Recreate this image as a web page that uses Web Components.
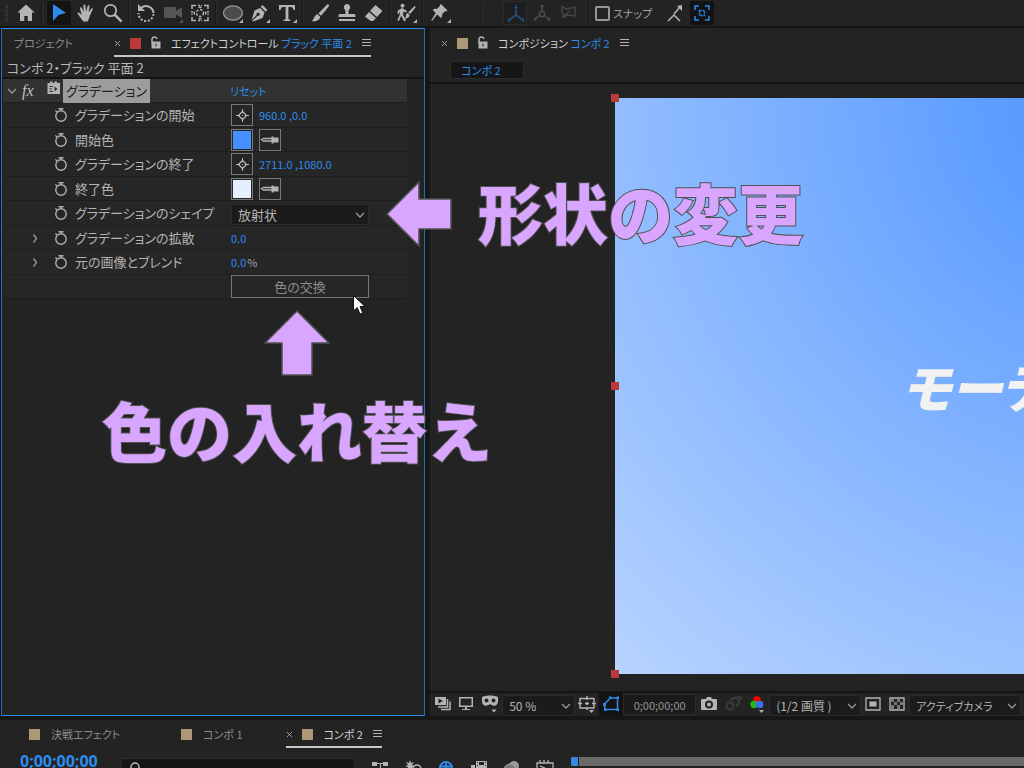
<!DOCTYPE html>
<html lang="ja">
<head>
<meta charset="utf-8">
<title>エフェクトコントロール</title>
<style>
html, body { height: 100%; margin: 0; }
body {
  background: #161616; color: #b8b8b8; overflow: hidden;
  font: 13px/20px "Noto Sans CJK JP", sans-serif;
  font-feature-settings: "palt";
  --blue: #2d8ceb; --panel: #232323; --tan: #ad9776; --red: #b93a38;
}
</style>
</head>
<body>
<ae-app></ae-app>
<script>
const ICONS = {
  grip: '<g fill="#3c3c3c"><path d="M8 4h3v1H8zM8 6h3v1H8zM8 8h3v1H8zM8 10h3v1H8zM8 12h3v1H8zM8 14h3v1H8zM8 16h3v1H8zM8 18h3v1H8zM8 20h3v1H8z"/></g>',
  home: '<path d="M12 3.500l8.600 8H18V20h-4.300v-5h-3.400v5H6v-8.500H3.400z"/>',
  select: '<path fill="#2d8ceb" d="M6 3l13 9-7.500 2L6 20z"/>',
  hand: '<path d="M9.500 20.500C7 18 5.500 15 3.600 12.800c-.5-1.200.9-1.700 1.800-.9l2.300 2L6 7.400c-.2-1.500 1.500-1.700 1.900-.4L9.700 11 9.400 4.600c0-1.500 1.900-1.500 2 0l.7 6.200 1.500-5.800c.5-1.300 2.100-.9 1.900.5l-.8 6 2.500-3.900c.9-1 2-.2 1.500 1l-3 6.500c-.4 2.200-1.300 3.900-2.200 5.400z"/>',
  zoom: '<circle cx="9.500" cy="9.500" r="5.700" fill="none" stroke="currentColor" stroke-width="1.700"/><path d="M13.600 13.600l7 7" stroke="currentColor" stroke-width="2.500"/>',
  rotate: '<path d="M7 7a7.500 7.500 0 0 1 12.500 5" fill="none" stroke="currentColor" stroke-width="2"/><path d="M19.500 13a7.500 7.500 0 0 1-15-1" fill="none" stroke="currentColor" stroke-width="2" stroke-dasharray="2 1.700"/><path d="M4 3v7h7z"/>',
  camera: '<g fill="#555"><rect x="3" y="6" width="12" height="11" rx="1"/><path d="M15 10l6-4v11l-6-3.500zM22 18v4h-4z"/></g>',
  frame: '<g fill="none" stroke="currentColor" stroke-width="1.500"><path d="M4 8V4.500h4M16 4.500h4V8M20 16v3.500h-4M8 19.500H4V16" /><path d="M10 4.500h4M10 19.500h4M4 10v4M20 10v4" stroke-dasharray="2 1"/><circle cx="12" cy="12" r="3.500" stroke-dasharray="2.500 1.500"/></g><path d="M12 5l2 2h-4zM12 19l2-2h-4zM5 12l2-2v4zM19 12l-2-2v4z"/>',
  ellipse: '<ellipse cx="12" cy="12" rx="9.500" ry="7.200" fill="#4c4c4c" stroke="#999" stroke-width="1.300"/><path d="M22 18v4h-4z"/>',
  pen: '<path d="M14.500 4l5 5-1.800 1.800-5-5zM12 7l4.600 4.600-2 5.400L5 20.500 4.300 20 9.500 14.700a1.500 1.500 0 1 0-.8-.8L3.600 19.200 6.500 9.500zM22 18v4h-4z"/>',
  type: '<path d="M4 4h16v5h-1.500c-.3-2-1-3-3-3H13.400v11.500c0 1 .6 1.300 2.100 1.300V20h-7v-1.200c1.500 0 2.100-.3 2.100-1.300V6H8.500c-2 0-2.700 1-3 3H4zM22 18v4h-4z"/>',
  brush: '<path d="M20.500 3.500c1 .8.300 2-.3 2.700L13 14.800l-2.600-2.300 8-8.300c.7-.7 1.400-1.200 2.100-.7zM9.500 13.300l2.800 2.500c-.5 3.500-4.500 5.200-8.800 4.200 2.800-1 2.300-5.700 6-6.700z"/>',
  stamp: '<path d="M12 3a3.200 3.200 0 0 1 2 5.700c-.7 1-.5 3.300-.3 4.300H19c1 0 1.500.8 1.500 2v1h-17v-1c0-1.200.5-2 1.500-2h5.300c.2-1 .4-3.300-.3-4.300A3.200 3.200 0 0 1 12 3zM4 18h16v2H4z"/>',
  eraser: '<path d="M13.500 4l7 6-5.500 6-7-6zM7 11l7 6-2.800 3H8.500L3 15.500z"/>',
  roto: '<circle cx="7.500" cy="4.800" r="2"/><path d="M3 9.500l4-2.500 5 3-1 1.500-2.500-1-.5 3 3 6-1.800 1-3-6L4 20l-1.700-.8 2.500-5.700V10l-1 3-1.500-.5zM20 5c1 .8.300 1.800-.3 2.500L15 13l-1.800-1.600L18.500 6c.5-.6 1-1.100 1.500-1zM12.500 12l2.200 1.900c-.6 2.600-2.500 3.600-5.200 3.600 2-1.200 1-4.800 3-5.500zM22 18v4h-4z"/>',
  pin: '<path d="M13 3l6.500 6.500-1.500 1-1-.2-2.800 2.800c.2 1.800-.2 3-1.200 4L9.200 13.500 4 20l-.8-.6 4.500-7.400L4.700 9c1.200-1 2.400-1.300 4.200-1.100L12 5l-.2-1zM23 18v4h-4z"/>',
  axis: '<g fill="none" stroke="#204f7d" stroke-width="1.600"><path d="M12 5v8M12 13l-7 5M12 13l7 5"/></g><path fill="#204f7d" d="M12 3l2 3h-4zM4 20v-4l3 3zM20 20v-4l-3 3z"/>',
  world: '<g fill="none" stroke="#4b4b4b" stroke-width="1.500"><path d="M12 5v6M10 14l-5 4M14 14l5 4"/><circle cx="12" cy="13" r="2.700"/></g><path fill="#4b4b4b" d="M12 3l2 3h-4zM4 20v-4l3 3zM20 20v-4l-3 3z"/>',
  view: '<path fill="none" stroke="#444" stroke-width="1.500" d="M5 6l5 2 8-2v9l-8-1-5 2 8-6M5 4v8l4 5"/>',
  snapArrow: '<path fill="none" stroke="currentColor" stroke-width="1.500" d="M5 20l6-6 6 6M11 13l6-7"/><path d="M19 4v6l-5-5z"/>',
  snapBox: '<g fill="none" stroke="#2d8ceb" stroke-width="1.500"><path d="M5 9V5h4M15 5h4v4M19 15v4h-4M9 19H5v-4"/><path stroke-dasharray="2 1" d="M9.500 9.500h5v5h-5z"/></g>',
  lock: '<path fill="none" stroke="currentColor" stroke-width="1.500" d="M8 12V9a2.500 2.500 0 0 1 5-1"/><path d="M7.500 10.500h9v7h-9zM11.500 12.500v3h1v-3z" fill-rule="evenodd"/>',
  menu: '<path d="M8 8h9v1H8zM8 11h9v1H8zM8 14h9v1H8z"/>',
  close: '<path stroke="currentColor" stroke-width="1" d="M10 10l5 5M15 10l-5 5"/>',
  down: '<path fill="none" stroke="currentColor" stroke-width="1.300" d="M8 10l4 4 4-4"/>',
  right: '<path fill="none" stroke="currentColor" stroke-width="1.300" d="M10.500 8.500l3 4-3 4"/>',
  dot: '<path fill="#3a3a3a" d="M12 12h1v1h-1z"/>',
  brick: '<path fill-rule="evenodd" d="M5.500 6h2.500V4.500h2.500V6h2V4.500H15V6h3v11H5.500zM7.500 9v1H11V9zM7.500 11.500v1H10v-1zM7.500 14v1H11v-1zM12.500 9.500v5l3-2.500z"/>',
  watch: '<circle cx="12" cy="13" r="5.200" fill="none" stroke="#b0b0b0" stroke-width="1.400"/><path fill="none" stroke="#b0b0b0" stroke-width="1.400" d="M12 8V5.500M9.500 5.700h5M6.300 7.500l1.700 1.200"/>',
  target: '<g fill="none" stroke="currentColor" stroke-width="1"><path d="M12.500 6v4M12.500 15v4M6 12.500h4M15 12.500h4"/><path stroke-width="1.300" d="M12.500 8.500l4 4-4 4-4-4z"/></g><path d="M12 12h1v1h-1z"/>',
  dropper: '<path d="M14.500 9.500h6v5h-6z"/><path d="M13.500 8.500h2v7h-2z"/><path fill="none" stroke="currentColor" stroke-width="1.300" d="M14 10.500H5.500l-2 1 2 1.500H14"/>',
  stack: '<path d="M4 5h11v8H4z"/><path fill="#232323" d="M7.500 6.500l4.500 2.500-4.500 2.500z"/><path fill="none" stroke="currentColor" stroke-width="1.500" d="M16.500 7v8H7M19 9.500v8H10"/>',
  monitor: '<path fill-rule="evenodd" d="M5 5h14v10H5zM6.500 6.500v7h11v-7zM11 15h2v2h3v1H8v-1h3z"/>',
  mask: '<path fill-rule="evenodd" d="M4 5c5-2 11-2 16 0v5c-1 5-5 4-8 2-3 2-7 3-8-2zM6.500 8.500a2 2 0 1 0 4 0 2 2 0 1 0-4 0M13.500 8.500a2 2 0 1 0 4 0 2 2 0 1 0-4 0M13.500 17.500h5L16 20.500z"/>',
  guides: '<g fill="none" stroke="currentColor" stroke-width="1.400"><path d="M5 6.500h14v9.500H5zM12 4v4M12 10v3M12 15v3M3 11.500h4M17 11.500h4M10 11.500h4"/></g><path d="M14 18h5l-2.500 3z"/>',
  region: '<path fill="none" stroke="#2d8ceb" stroke-width="1.500" d="M6 17.500L5.500 12l6-6h7v11.500z"/><path fill="#2d8ceb" d="M4 11h3v3H4zM17.500 4.500h2.500v2.500h-2.500zM17.500 16.500H20V19h-2.500zM5 16.500h2.500V19H5zM10 4.500h2.500v2.500H10z"/>',
  snapshot: '<path fill-rule="evenodd" d="M5 7h4l1-2h4l1 2h4q1 0 1 1v9q0 1-1 1H5q-1 0-1-1V8q0-1 1-1zM8 12.500a4 4 0 1 0 8 0 4 4 0 1 0-8 0M10 12.500a2 2 0 1 0 4 0 2 2 0 1 0-4 0"/>',
  ghost: '<g fill="none" stroke="#3c3c3c" stroke-width="2"><circle cx="9" cy="14" r="3.500"/><path d="M10 9a4 4 0 1 1 5 4.500"/><path d="M17 5.500a1.500 1.500 0 1 1 2 2"/></g>',
  rgb: '<circle cx="12" cy="8" r="3.700" fill="#f00"/><circle cx="9" cy="12.500" r="3.700" fill="#1db81d"/><circle cx="14.700" cy="12.500" r="3.700" fill="#3c6cf5"/><path d="M14 18h5l-2.500 3z"/>',
  solidBox: '<path fill="none" stroke="currentColor" stroke-width="1.300" d="M5 6h14v12H5z"/><path d="M8.500 9.500h7v5h-7z"/>',
  checker: '<path fill="none" stroke="currentColor" stroke-width="1.300" d="M5 6h14v12H5z"/><path fill="#777" d="M6 7h3v3H6zM12 7h3v3h-3zM9 10h3v3H9zM15 10h3v3h-3zM6 13h3v4H6zM12 13h3v4h-3z"/>',
  flow: '<path d="M4 5h5v1h6V5h5v4h-5V7h-2v14h-1V7H9v2H4z"/>',
  spark: '<path d="M9 3l1 3 3-1-2 3 3 1-3 1 1 3-3-2-3 2 1-3-3-1 3-1-2-3 3 1z"/><circle cx="16" cy="12" r="4" fill="none" stroke="currentColor" stroke-width="1.500"/>',
  globe: '<g fill="none" stroke="#2d8ceb" stroke-width="1.800"><circle cx="12" cy="11" r="6"/><path d="M5 9.500h14M12 5v14"/></g>',
  film: '<path fill-rule="evenodd" d="M9 4h11v16H9zM10 5v1h1V5zM18 5v1h1V5zM10 8v1h1V8zM18 8v1h1V8zM12 5v3h5V5zM4 8h4v11H4z"/>',
  blob: '<circle cx="14" cy="9" r="5" fill="#999"/><circle cx="10" cy="13" r="6" fill="#777" stroke="#aaa"/>',
  graph: '<path fill="none" stroke="currentColor" stroke-width="1.300" d="M4 6h16v14H4zM7 3v3M11 3v3M15 3v3M7 9l5 2"/>',
  search: '<circle cx="13" cy="8" r="4" fill="none" stroke="currentColor" stroke-width="1.500"/>'
};

function define(name, markup, setup) {
  const template = document.createElement('template');
  template.innerHTML = '<style>*{box-sizing:border-box}' +
    'button,input,select{font:inherit;font-feature-settings:inherit;color:inherit;margin:0;border:0;padding:0;background:none;outline:0}' +
    'a{color:inherit;text-decoration:none}</style>' + markup;
  customElements.define(name, class extends HTMLElement {
    connectedCallback() {
      if (this.shadowRoot) return;
      this.attachShadow({ mode: 'open' }).append(template.content.cloneNode(true));
      if (setup) setup(this, this.shadowRoot);
    }
  });
}

function swap(node, markup) {
  const template = document.createElement('template');
  template.innerHTML = markup;
  node.replaceWith(template.content);
}

define('ae-icon', `<style>
  :host { display: block; flex: none; width: 24px; height: 24px; }
  svg { display: block; width: 24px; height: 24px; fill: currentColor; }
</style><svg viewBox="0 0 24 24" aria-hidden="true"></svg>`,
(host, root) => { root.querySelector('svg').innerHTML = ICONS[host.getAttribute('name')] || ''; });

define('ae-tool', `<style>
  :host { display: block; flex: none; width: 27px; }
  button { display: grid; place-items: center; width: 24px; height: 24px; margin: 0 auto; border-radius: 2px; color: #b4b4b4; }
  :host([on]) button { background: #131313; }
  :host([boxed]) button { background: #1e1e1e; border: 1px solid #2b2b2b; }
</style><button type="button"><span></span></button>`,
(host, root) => {
  const icon = host.getAttribute('icon');
  swap(root.querySelector('span'), '<ae-icon name="' + icon + '"></ae-icon>');
  root.querySelector('button').setAttribute('aria-label', icon);
});

define('ae-toolbar', `<style>
  :host { display: flex; align-items: center; height: 26px; background: var(--panel); overflow: hidden; }
  i { flex: none; width: 2px; height: 22px; margin: 0 2px; background: #181818; border-right: 1px solid #2c2c2c; }
  .grip { width: 12px; margin-left: -3px; margin-right: 3px; overflow: hidden; }
  .far { margin-left: 28px; margin-right: 18px; }
  .near { margin-left: 6px; margin-right: 5px; }
  label { display: flex; align-items: center; gap: 3px; margin-right: 9px; color: #a0a0a0; font-size: 11px; }
  input { appearance: none; width: 15px; height: 15px; border: 2px solid #969696; border-radius: 2px; }
</style>
<ae-icon class="grip" name="grip"></ae-icon><ae-tool icon="home"></ae-tool><i></i>
<ae-tool icon="select" on></ae-tool><ae-tool icon="hand"></ae-tool><ae-tool icon="zoom"></ae-tool><i></i>
<ae-tool icon="rotate"></ae-tool><ae-tool icon="camera"></ae-tool><ae-tool icon="frame"></ae-tool><i></i>
<ae-tool icon="ellipse"></ae-tool><ae-tool icon="pen"></ae-tool><ae-tool icon="type"></ae-tool><i></i>
<ae-tool icon="brush"></ae-tool><ae-tool icon="stamp"></ae-tool><ae-tool icon="eraser"></ae-tool><i></i>
<ae-tool icon="roto"></ae-tool><i></i><ae-tool icon="pin"></ae-tool><i class="far"></i>
<ae-tool icon="axis" boxed></ae-tool><ae-tool icon="world"></ae-tool><ae-tool icon="view"></ae-tool><i class="near"></i>
<label><input type="checkbox">スナップ</label>
<ae-tool icon="snapArrow"></ae-tool><ae-tool icon="snapBox" on></ae-tool>`);

define('ae-tab', `<style>
  :host { display: block; flex: none; color: #8c8c8c; font-size: 11px; }
  a { display: flex; align-items: center; height: 28px; padding-top: 2px; white-space: pre; border-bottom: 2px solid transparent; }
  :host([on]) a { border-color: #c8c8c8; color: #d2d2d2; }
  :host([bare]) a { border-color: transparent; }
  .swatch { flex: none; width: 11px; height: 11px; margin-right: 11px; background: var(--tan); }
  :host([red]) .swatch { background: var(--red); }
  .close { margin: 0 1px 0 -9px; color: #999; }
  .menu { margin: 0 -7px 0 2px; color: #b4b4b4; }
  .lock { margin: 0 3px 0 -8px; color: #b4b4b4; }
  :host(:not([lock])) .lock, :host([plain]) .swatch, :host(:not([on])) .close, :host(:not([on])) .menu { display: none; }
  ::slotted(b) { color: var(--blue); font-weight: 400; }
</style><a href="#"><ae-icon class="close" name="close"></ae-icon><span class="swatch"></span><ae-icon class="lock" name="lock"></ae-icon><span><slot></slot></span><ae-icon class="menu" name="menu"></ae-icon></a>`);

define('ae-property', `<style>
  :host { display: grid; flex: 1; grid-template-columns: 50px 22px 156px 1fr; align-items: center; min-height: 0; border-bottom: 1px solid #1e1e1e; color: #b4b4b4; white-space: nowrap; }
  .fold { margin-left: 20px; color: #999; }
  .watch { margin-left: -4px; }
  .value { display: flex; align-items: center; gap: 6px; color: var(--blue); font-size: 11px; }
  :host([head]) { grid-template-columns: 19px 25px 183px 1fr; background: #323232; }
  :host([head]) .fold { margin-left: -3px; }
  em { font: italic 16px/20px "Liberation Serif", serif; color: #c0c0c0; }
  .title { display: flex; align-items: center; }
  .title ae-icon { margin: -4px -3px 0 -5px; }
  .title span { padding: 2px 3px; background: #9c9c9c; color: #202020; }
</style><span data-part="fold"></span><span data-part="mark"></span><span data-part="name"></span><div class="value"><slot></slot></div>`,
(host, root) => {
  const head = host.hasAttribute('head');
  const label = host.getAttribute('label') || '';
  swap(root.querySelector('[data-part=fold]'), '<ae-icon class="fold" name="' + (host.getAttribute('fold') || 'dot') + '"></ae-icon>');
  swap(root.querySelector('[data-part=mark]'), head ? '<em>fx</em>' : host.hasAttribute('last') ? '<span></span>' : '<ae-icon class="watch" name="watch"></ae-icon>');
  swap(root.querySelector('[data-part=name]'), head ? '<div class="title"><ae-icon name="brick"></ae-icon><span>' + label + '</span></div>' : '<span>' + label + '</span>');
});

define('ae-square', `<style>
  :host { display: block; flex: none; color: #b4b4b4; }
  button { display: grid; place-items: center; width: 22px; height: 22px; border: 1px solid #787878; background: var(--fill, transparent); background-clip: content-box; padding: 1px; }
  ae-icon { margin: -3px; }
</style><button type="button" aria-label="値の設定"></button>`,
(host, root) => {
  const icon = host.getAttribute('icon');
  if (icon) root.querySelector('button').innerHTML = '<ae-icon name="' + icon + '"></ae-icon>';
});

define('ae-select', `<style>
  :host { display: grid; align-items: center; flex: none; height: 21px; color: #b4b4b4; }
  select { grid-area: 1 / 1; appearance: none; width: 100%; height: 21px; padding: 0 20px 0 6px; background: #1b1b1b; border: 1px solid #2b2b2b; border-radius: 2px; }
  ae-icon { grid-area: 1 / 1; justify-self: end; margin-right: -3px; color: #999; pointer-events: none; }
</style><select><option></option></select><ae-icon name="down"></ae-icon>`,
(host, root) => {
  root.querySelector('option').textContent = host.getAttribute('value');
  root.querySelector('select').setAttribute('aria-label', host.getAttribute('value'));
});

define('ae-effects', `<style>
  :host { display: flex; flex-direction: column; min-width: 0; background: var(--panel); border: 1px solid #256fb8; border-top-color: var(--blue); border-bottom-color: var(--blue); }
  nav { display: flex; gap: 41px; padding-left: 12px; height: 28px; }
  h2 { margin: 0; padding: 2px 5px 0; height: 22px; font-size: 13px; line-height: 18px; font-weight: 400; border-bottom: 2px solid #141414; color: #b8b8b8; }
  section { display: flex; flex-direction: column; height: 220px; margin: 0 17px 0 1px; background: #262626; }
  ae-select { width: 138px; font-size: 13px; }
  .swap { width: 138px; height: 23px; border: 1px solid #787878; color: #8c8c8c; font-size: 13px; }
  .unit { color: #a0a0a0; margin-left: -5px; }
</style>
<nav><ae-tab plain>プロジェクト</ae-tab><ae-tab on red lock>エフェクトコントロール <b>ブラック 平面 2</b></ae-tab></nav>
<h2>コンポ 2・ブラック 平面 2</h2>
<section>
  <ae-property head fold="down" label="グラデーション"><a href="#">リセット</a></ae-property>
  <ae-property label="グラデーションの開始"><ae-square icon="target"></ae-square><span>960.0 ,0.0</span></ae-property>
  <ae-property label="開始色"><ae-square style="--fill:#468fff"></ae-square><ae-square icon="dropper"></ae-square></ae-property>
  <ae-property label="グラデーションの終了"><ae-square icon="target"></ae-square><span>2711.0 ,1080.0</span></ae-property>
  <ae-property label="終了色"><ae-square style="--fill:#e6efff"></ae-square><ae-square icon="dropper"></ae-square></ae-property>
  <ae-property label="グラデーションのシェイプ"><ae-select value="放射状"></ae-select></ae-property>
  <ae-property fold="right" label="グラデーションの拡散"><span>0.0</span></ae-property>
  <ae-property fold="right" label="元の画像とブレンド"><span>0.0</span><span class="unit">%</span></ae-property>
  <ae-property last><button class="swap" type="button">色の交換</button></ae-property>
</section>`);

define('ae-viewer', `<style>
  :host { display: flex; flex-direction: column; min-width: 0; min-height: 0; background: var(--panel); overflow: hidden; }
  nav { height: 30px; padding: 1px 0 0 11px; flex: none; }
  .crumbs { flex: none; height: 26px; padding: 3px 0 0 20px; border-bottom: 2px solid #141414; }
  .crumbs a { display: block; width: 74px; height: 18px; padding-left: 10px; background: #161616; border: 1px solid #2b2b2b; color: var(--blue); font-size: 11px; line-height: 16px; border-radius: 2px; }
  .stage { flex: 1; min-height: 0; padding: 14px 0 17px 185px; border-bottom: 2px solid #141414; }
  .comp { position: relative; height: 100%; aspect-ratio: 16 / 9; background: radial-gradient(circle at 50% 0, #4a92ff, #e6efff 1097px); }
  .comp p { position: absolute; left: 28%; top: 50%; margin: 0; transform: translateY(-50%); font: italic 900 52px/72px "Noto Sans CJK JP", sans-serif; font-feature-settings: "palt"; color: #f2f2f2; white-space: nowrap; }
  .comp i { position: absolute; left: -4px; width: 8px; height: 8px; background: var(--red); }
  .bar { flex: none; display: flex; align-items: center; height: 23px; color: #b4b4b4; font-size: 12px; padding: 0 0 1px 1px; }
  .bar ae-tool { width: 23px; }
  .bar ae-tool.wide { width: 25px; }
  .time { width: 73px; height: 21px; text-align: center; background: #1b1b1b; border: 1px solid #2b2b2b; color: #969696; font-size: 11px; }
  .z { width: 73px; } .q { width: 92px; } .c { width: 112px; font-size: 11px; }
</style>
<nav><ae-tab on bare lock>コンポジション <b>コンポ 2</b></ae-tab></nav>
<div class="crumbs"><a href="#">コンポ 2</a></div>
<div class="stage"><div class="comp"><p>モーテ</p><i style="top:-4px"></i><i style="top:calc(50% - 4px)"></i><i style="bottom:-4px"></i></div></div>
<div class="bar">
  <ae-tool icon="stack"></ae-tool><ae-tool icon="monitor"></ae-tool><ae-tool class="wide" icon="mask"></ae-tool>
  <ae-select class="z" value="50 %"></ae-select>
  <ae-tool icon="guides"></ae-tool><ae-tool class="wide" icon="region" on></ae-tool>
  <button class="time" type="button">0;00;00;00</button>
  <ae-tool class="wide" icon="snapshot"></ae-tool><ae-tool icon="ghost"></ae-tool><ae-tool class="wide" icon="rgb"></ae-tool>
  <ae-select class="q" value="(1/2 画質 )"></ae-select>
  <ae-tool icon="solidBox"></ae-tool><ae-tool class="wide" icon="checker"></ae-tool>
  <ae-select class="c" value="アクティブカメラ"></ae-select>
</div>`);

define('ae-timeline', `<style>
  :host { display: block; background: var(--panel); overflow: hidden; }
  nav { display: flex; padding-left: 29px; height: 28px; }
  .two { margin-left: 61px; } .three { margin-left: 43px; }
  .row { display: flex; padding-left: 20px; height: 20px; }
  .code { flex: none; width: 81px; height: 16px; margin-top: 5px; text-align: left; color: var(--blue); font: 700 16px/16px "Open Sans", sans-serif; white-space: nowrap; }
  .find { flex: none; display: flex; width: 234px; height: 20px; margin: 10px 8px 0 20px; background: #161616; border: 1px solid #2b2b2b; }
  .find input { flex: 1; min-width: 0; }
  .row ae-tool { width: 33px; margin-top: 9px; }
  .ruler { flex: 1; height: 9px; margin: 9px 0 0 10px; background: #6a6a6a; }
  .ruler i { display: block; width: 8px; height: 9px; background: var(--blue); border-right: 1px solid #1c1c1c; border-radius: 4px 0 0 4px; }
</style>
<nav><ae-tab>決戦エフェクト</ae-tab><ae-tab class="two">コンポ 1</ae-tab><ae-tab class="three" on>コンポ 2</ae-tab></nav>
<div class="row"><button class="code" type="button">0;00;00;00</button>
<label class="find"><ae-icon name="search"></ae-icon><input type="search" aria-label="検索"></label>
<ae-tool icon="flow"></ae-tool><ae-tool icon="spark"></ae-tool><ae-tool icon="globe"></ae-tool><ae-tool icon="film"></ae-tool><ae-tool icon="blob"></ae-tool><ae-tool icon="graph"></ae-tool>
<div class="ruler"><i></i></div></div>`);

define('ae-note', `<style>
  :host { position: absolute; display: flex; align-items: center; pointer-events: none; color: #d8a6ff; font: 900 65px/72px "Noto Sans CJK JP", sans-serif; font-feature-settings: normal; white-space: nowrap; }
  :host([up]) { flex-direction: column; }
  span { padding-bottom: 6px; -webkit-text-stroke: 2px #505050; paint-order: stroke fill; }
  svg { display: block; flex: none; width: 66px; height: 68px; margin-right: 26px; }
  :host([up]) svg { transform: rotate(90deg); margin: 0 0 16px; }
</style><svg viewBox="0 0 66 68"><path d="M1 34L33 2V19H65V49H33V66Z" fill="#d8a6ff" stroke="#505050" stroke-width="1.500"/></svg><span><slot></slot></span>`);

define('ae-app', `<style>
  :host { display: grid; position: relative; grid-template-rows: 26px 1fr 48px; row-gap: 2px; height: 100vh; }
  main { display: grid; grid-template-columns: 5fr 7fr; column-gap: 5px; padding: 0 0 2px 1px; min-height: 0; }
  .shape { left: 386px; top: 175px; }
  .swap { left: 102px; top: 309px; }
  .pointer { position: absolute; left: 352px; top: 294px; width: 16px; height: 22px; }
</style>
<ae-toolbar></ae-toolbar>
<main><ae-effects></ae-effects><ae-viewer></ae-viewer></main>
<ae-timeline></ae-timeline>
<ae-note class="shape">形状の変更</ae-note>
<ae-note class="swap" up>色の入れ替え</ae-note>
<svg class="pointer" viewBox="0 0 16 22"><path d="M1.500 1.500V17l3.700-3.500L8 20l2.700-1.200L8 12.500h5z" fill="#fff" stroke="#111"/></svg>`);
</script>
</body>
</html>
